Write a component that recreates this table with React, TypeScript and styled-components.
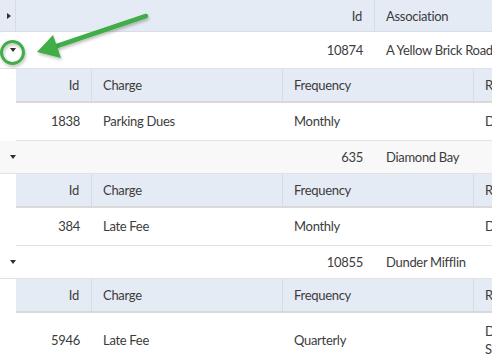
import { createGlobalStyle, styled } from 'styled-components'

interface iCharge {
  id: number;
  charge: string;
  frequency: string;
  recurs: string;
}

interface iAssociation {
  id: number;
  name: string;
  charges: iCharge[];
}

const data: iAssociation[] = [
  { id: 10874, name: 'A Yellow Brick Road', charges: [{ id: 1838, charge: 'Parking Dues', frequency: 'Monthly', recurs: 'Day 1' }] },
  { id: 635, name: 'Diamond Bay', charges: [{ id: 384, charge: 'Late Fee', frequency: 'Monthly', recurs: 'Day 5' }] },
  { id: 10855, name: 'Dunder Mifflin', charges: [{ id: 5946, charge: 'Late Fee', frequency: 'Quarterly', recurs: 'Day 1\nStarting Jan' }] },
]

const App = () => {
  return (
    <Frame>
      <Global />
      <MasterHead>
        <CaretCell $head>
          <Caret $dir="right" />
        </CaretCell>
        <HeadCell $align="right" $divider>Id</HeadCell>
        <HeadCell>Association</HeadCell>
      </MasterHead>

      {data.map((a, i) => (
        <div key={a.id}>
          <MasterRow $alt={i % 2 === 1} $tall={i === 0}>
            <CaretCell>
              <Caret $dir="down" />
            </CaretCell>
            <Cell $align="right">{a.id}</Cell>
            <Cell>{a.name}</Cell>
          </MasterRow>
          <Detail>
            <DetailHead>
              <HeadCell $align="right" $divider>Id</HeadCell>
              <HeadCell $divider>Charge</HeadCell>
              <HeadCell $divider>Frequency</HeadCell>
              <HeadCell>Recurrence</HeadCell>
            </DetailHead>
            {a.charges.map((c) => (
              <DetailRow key={c.id}>
                <DataCell $align="right">{c.id}</DataCell>
                <DataCell>{c.charge}</DataCell>
                <DataCell>{c.frequency}</DataCell>
                <DataCell>{c.recurs}</DataCell>
              </DetailRow>
            ))}
          </Detail>
        </div>
      ))}

      {/* callout drawn over the grid */}
      <Callout width="170" height="75" viewBox="0 0 170 75">
        <defs>
          <filter id="sh" x="-20%" y="-40%" width="140%" height="180%">
            <feDropShadow dx="1" dy="2" stdDeviation="1.5" floodColor="#000" floodOpacity="0.25" />
          </filter>
        </defs>
        <g filter="url(#sh)" fill="none" stroke="#3fad46" strokeLinecap="round">
          <circle cx="12.5" cy="52.5" r="11" strokeWidth="3" />
          <line x1="146" y1="16" x2="54" y2="47" strokeWidth="4.5" />
        </g>
        <polygon filter="url(#sh)" points="37,52 53,35 61,58" fill="#3fad46" />
      </Callout>
    </Frame>
  )
}

export default App;

const Global = createGlobalStyle`
body {
  margin: 0;
  background: #ffffff;
  font-family: Lato, "Open Sans", sans-serif;
  font-size: 13px;
  letter-spacing: -0.3px;
  color: #3c3c3c;
}
`
const Frame = styled.div`
position: relative;
width: 492px;
height: 356px;
overflow: hidden;
background: #ffffff;
`
const MasterHead = styled.div`
display: grid;
grid-template-columns: 16px 359px 160px;
height: 32px;
box-sizing: border-box;
background-color: #e5ebf4;
border-bottom: 1px solid #d9dee5;
`
const MasterRow = styled.div<{ $alt: boolean; $tall: boolean }>`
display: grid;
grid-template-columns: 16px 359px 160px;
height: ${(p) => (p.$tall ? 37 : 33)}px;
box-sizing: border-box;
background-color: ${(p) => (p.$alt ? '#f8f8f8' : '#ffffff')};
border-bottom: 1px solid #e2e2e2;
`
const HeadCell = styled.div<{ $align?: string; $divider?: boolean }>`
display: flex;
align-items: center;
justify-content: ${(p) => (p.$align === 'right' ? 'flex-end' : 'flex-start')};
padding: 0 12px 0 11px;
box-sizing: border-box;
white-space: nowrap;
border-right: ${(p) => (p.$divider ? '1px solid #d6dce4' : 'none')};
`
const Cell = styled.div<{ $align?: string }>`
display: flex;
align-items: center;
justify-content: ${(p) => (p.$align === 'right' ? 'flex-end' : 'flex-start')};
padding: 0 12px 0 11px;
white-space: nowrap;
`
const CaretCell = styled.div<{ $head?: boolean }>`
display: flex;
align-items: center;
padding-left: ${(p) => (p.$head ? 7 : 9)}px;
box-sizing: border-box;
border-right: ${(p) => (p.$head ? '1px solid #d6dce4' : 'none')};
`
const Caret = styled.span<{ $dir: 'right' | 'down' }>`
width: 0;
height: 0;
${(p) =>
  p.$dir === 'down'
    ? `border-left: 3.5px solid transparent;
       border-right: 3.5px solid transparent;
       border-top: 4px solid #2e2e2e;
       margin-left: 0.5px;`
    : `border-top: 3.5px solid transparent;
       border-bottom: 3.5px solid transparent;
       border-left: 4px solid #2e2e2e;`}
`
const Detail = styled.div`
padding-left: 16px;
`
const DetailHead = styled.div`
display: grid;
grid-template-columns: 76px 191px 191px 120px;
height: 34px;
box-sizing: border-box;
background-color: #e5ebf4;
border-bottom: 2px solid #d9d9d9;
`
const DetailRow = styled.div`
display: grid;
grid-template-columns: 76px 191px 191px 120px;
border-bottom: 1px solid #e2e2e2;
`
const DataCell = styled.div<{ $align?: string }>`
display: flex;
align-items: center;
justify-content: ${(p) => (p.$align === 'right' ? 'flex-end' : 'flex-start')};
padding: 9px 12px 10px 11px;
line-height: 18px;
white-space: pre;
`
const Callout = styled.svg`
position: absolute;
top: 0;
left: 0;
pointer-events: none;
`
